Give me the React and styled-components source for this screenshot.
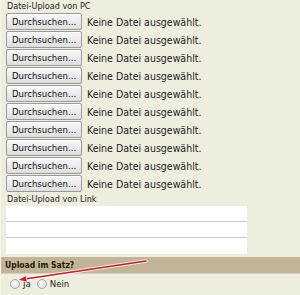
import React from "react";
import styled, { createGlobalStyle } from "styled-components";

const GlobalStyle = createGlobalStyle`
  html, body {
    margin: 0;
    padding: 0;
    background: #eeeedf;
  }
  body {
    font-family: "DejaVu Sans Condensed", "DejaVu Sans", Verdana, sans-serif;
    color: #222;
  }
`;

const FILE_ROWS = 10;

const App = () => {
  return (
    <>
      <GlobalStyle />
      <Page>
        <Section>
          <Caption>Datei-Upload von PC</Caption>
          <FileList>
            {Array.from({ length: FILE_ROWS }).map((_, i) => (
              <FileRow key={i}>
                <BrowseButton type="button">Durchsuchen...</BrowseButton>
                <FileStatus>Keine Datei ausgewählt.</FileStatus>
              </FileRow>
            ))}
          </FileList>
        </Section>

        <Section $top={1}>
          <Caption>Datei-Upload von Link</Caption>
          <LinkList>
            <LinkInput />
            <LinkInput />
            <LinkInput />
          </LinkList>
        </Section>

        <Band>Upload im Satz?</Band>
        <RadioRow>
          <RadioLabel>
            <Radio />
            Ja
          </RadioLabel>
          <RadioLabel>
            <Radio />
            Nein
          </RadioLabel>
        </RadioRow>

        <Arrow width="300" height="295" viewBox="0 0 300 295">
          <line x1="145" y1="261" x2="24" y2="279" stroke="#fff" strokeWidth="3.5" strokeLinecap="round" opacity="0.7" />
          <line x1="145" y1="261" x2="24" y2="279" stroke="#c0202a" strokeWidth="1.6" strokeLinecap="round" />
          <polygon points="17,280 25,275.5 26,282" fill="#c0202a" stroke="#fff" strokeWidth="0.6" />
        </Arrow>
      </Page>
    </>
  );
};

// Styles
const Page = styled.div`
  position: relative;
  width: 300px;
  height: 295px;
  overflow: hidden;
  border-left: 1px solid #f6f6ee;
  box-sizing: border-box;
`;

const Section = styled.div`
  padding: ${(p) => p.$top || 0}px 0 0 5px;
`;

const Caption = styled.div`
  font-size: 9px;
  line-height: 12px;
  padding-left: 1px;
  color: #222;
`;

const FileList = styled.div`
  display: flex;
  flex-direction: column;
  gap: 1px;
  padding-top: 1px;
`;

const FileRow = styled.div`
  display: flex;
  align-items: center;
  gap: 5px;
  height: 17px;
`;

const BrowseButton = styled.button`
  width: 76px;
  height: 17px;
  padding: 0;
  font-family: "DejaVu Sans Condensed", "DejaVu Sans", sans-serif;
  font-size: 9.5px;
  color: #111;
  background: linear-gradient(#f8f8f8, #dedede);
  border: 1px solid #9a9a9a;
  border-radius: 2px;
  box-shadow: inset 0 1px 0 #fff;
`;

const FileStatus = styled.span`
  font-size: 10.5px;
  color: #222;
  white-space: nowrap;
`;

const LinkList = styled.div`
  display: flex;
  flex-direction: column;
  width: 241px;
  margin-top: 1px;
`;

const LinkInput = styled.div`
  height: 15px;
  background: #fff;
  border-bottom: 1px solid #c8c8c8;

  &:last-child {
    border-bottom: none;
    height: 16px;
  }
`;

const Band = styled.div`
  margin-top: 3px;
  height: 16px;
  line-height: 16px;
  padding-left: 4px;
  background: #c2b597;
  border-bottom: 1px solid #d8d0ba;
  font-size: 8.5px;
  font-weight: bold;
  color: #1e1a10;
`;

const RadioRow = styled.div`
  display: flex;
  align-items: center;
  gap: 6px;
  padding: 4px 0 0 9px;
`;

const RadioLabel = styled.label`
  display: flex;
  align-items: center;
  gap: 3px;
  font-size: 9.5px;
  color: #222;
`;

const Radio = styled.span`
  display: inline-block;
  width: 8px;
  height: 8px;
  border-radius: 50%;
  border: 1px solid #a8a8a8;
  background: radial-gradient(circle at 40% 40%, #fff, #d6d6d6);
`;

const Arrow = styled.svg`
  position: absolute;
  left: 0;
  top: 0;
  pointer-events: none;
`;

export default App;
